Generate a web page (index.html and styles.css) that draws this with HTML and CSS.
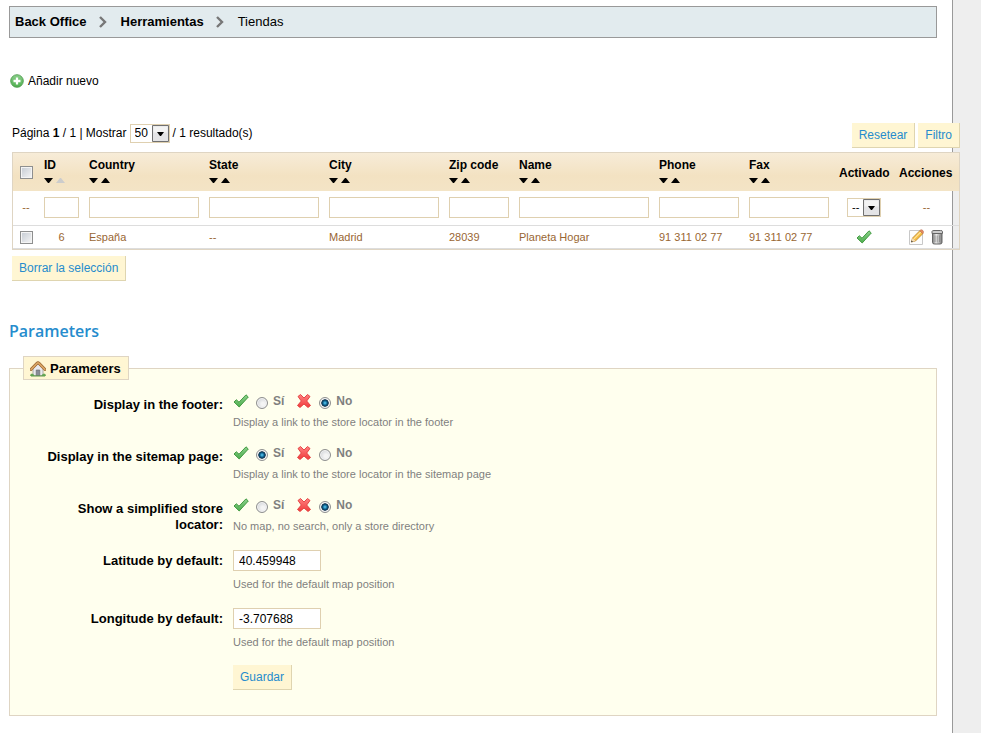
FILE: index.html
```html
<!DOCTYPE html>
<html lang="es">
<head>
    <meta charset="UTF-8">
    <meta name="viewport" content="width=device-width, initial-scale=1.0">
    <title>Tiendas</title>
    <link rel="stylesheet" href="styles.css">
</head>
<body>
    <svg class="sprite" aria-hidden="true">
        <defs>
            <linearGradient id="green" x1="0" y1="0" x2="0" y2="1">
                <stop offset="0" stop-color="#8bd08b"/>
                <stop offset="1" stop-color="#4fae4f"/>
            </linearGradient>
            <linearGradient id="red" x1="0" y1="0" x2="0" y2="1">
                <stop offset="0" stop-color="#ff8080"/>
                <stop offset="1" stop-color="#f03c3c"/>
            </linearGradient>
            <linearGradient id="metal">
                <stop offset="0" stop-color="#777"/>
                <stop offset=".4" stop-color="#eee"/>
                <stop offset="1" stop-color="#777"/>
            </linearGradient>
        </defs>
        <symbol id="chevron" viewBox="0 0 8 12">
            <path d="M1 1l5 5-5 5" fill="none" stroke="#777" stroke-width="2.4"/>
        </symbol>
        <symbol id="add" viewBox="0 0 16 16">
            <circle cx="8" cy="8" r="7.2" fill="url(#green)" stroke="#4d9a4d"/>
            <path d="M8 4v8M4 8h8" stroke="#fff" stroke-width="2.6"/>
        </symbol>
        <symbol id="check" viewBox="0 0 16 16">
            <path d="M1 9l2.3-2.3L6 9.2 13 1.8 15.3 4 6.2 14z" fill="url(#green)" stroke="#379337" stroke-width=".9" stroke-linejoin="round"/>
        </symbol>
        <symbol id="cross" viewBox="0 0 16 16">
            <path d="M2 3.5L4.5 1.5 8 5l3.5-3.5L14 3.5 10.7 8l3.8 4.5-2.500 2L8 11l-4 3.500-2.500-2L5.300 8z" fill="url(#red)" stroke="#e23a3a" stroke-width=".9" stroke-linejoin="round"/>
        </symbol>
        <symbol id="down" viewBox="0 0 9 5">
            <path d="M0 0h9L5 5H4z" fill="currentColor"/>
        </symbol>
        <symbol id="up" viewBox="0 0 9 5">
            <path d="M0 5h9L5 0H4z" fill="currentColor"/>
        </symbol>
        <symbol id="edit" viewBox="0 0 16 16">
            <path d="M1.500 1.500h13v14h-13z" fill="#fdfdfd" stroke="#c8c8c8"/>
            <path d="M3.300 13l1.200-4L11.800 1.700l3 3L7.500 12z" fill="#f6bd42" stroke="#b8842c" stroke-width=".8"/>
            <path d="M6 9.800l6.800-6.800" stroke="#ffe49a" stroke-width="1.200"/>
            <path d="M11.800 1.700l1-.9q1-.4 2 .6t.7 2l-.7 1.300z" fill="#e58a62" stroke="#b8684a" stroke-width=".5"/>
            <path d="M3.300 13l1.200-4 3 3z" fill="#f3dbb8"/>
            <path d="M3.100 13.300l.5-1.900 1.400 1.300z" fill="#333"/>
        </symbol>
        <symbol id="trash" viewBox="0 0 16 16">
            <path d="M3.500 4.500h9.500v9q0 1.500-2 1.500h-5.500q-2 0-2-1.500z" fill="url(#metal)" stroke="#666"/>
            <path d="M6 6.500v6.500M8.200 6.500v7M10.500 6.500v6.500" stroke="#888" stroke-width=".8"/>
            <path d="M3 2.500q0-1 2-1h6.500q2 0 2 1v2H3z" fill="#ccc" stroke="#666"/>
        </symbol>
        <symbol id="home" viewBox="0 0 16 16">
            <path d="M3 8l5-5 5 5v6.500H3z" fill="#e9e9ee" stroke="#999" stroke-width=".8"/>
            <path d="M6.200 9h3.600v5.500H6.200z" fill="#888c98" stroke="#666" stroke-width=".6"/>
            <path d="M1.200 8.300L7 2.300q1-.9 2 0l5.800 6" fill="none" stroke="#96602c" stroke-width="3" stroke-linecap="round"/>
            <path d="M1.200 8.300L7 2.300q1-.9 2 0l5.800 6" fill="none" stroke="#d9a464" stroke-width="1.800" stroke-linecap="round"/>
            <path d="M0 15q.2-2.500 2-2.500t2.500 2.500zM11.500 15q.5-2.500 2.500-2.500t2 2.500z" fill="#68a858"/>
            <path d="M1 15h14" stroke="#5a9a4c"/>
        </symbol>
    </svg>

    <main class="content">
        <nav class="path-bar">
            <a href="#">Back Office</a>
            <svg><use href="#chevron"/></svg>
            <a href="#">Herramientas</a>
            <svg><use href="#chevron"/></svg>
            <span>Tiendas</span>
        </nav>

        <a class="add-link" href="#"><svg><use href="#add"/></svg>Añadir nuevo</a>

        <form class="list">
            <div class="list-bar">
                <div class="pagination">
                    <span>Página <b>1</b> / 1 | <label for="pagination">Mostrar</label></span>
                    <select id="pagination"><option>50</option></select>
                    <span>/ 1 resultado(s)</span>
                </div>
                <div class="list-buttons">
                    <button type="button" class="button">Resetear</button>
                    <button type="button" class="button">Filtro</button>
                </div>
            </div>

            <table class="table">
                <thead>
                    <tr>
                        <th class="col-check"><input type="checkbox" aria-label="Seleccionar todo"></th>
                        <th class="col-id">ID<span class="sort"><a href="#" aria-label="Descendente"><svg><use href="#down"/></svg></a><a href="#" class="off" aria-label="Ascendente"><svg><use href="#up"/></svg></a></span></th>
                        <th class="col-place">Country<span class="sort"><a href="#" aria-label="Descendente"><svg><use href="#down"/></svg></a><a href="#" aria-label="Ascendente"><svg><use href="#up"/></svg></a></span></th>
                        <th class="col-place">State<span class="sort"><a href="#" aria-label="Descendente"><svg><use href="#down"/></svg></a><a href="#" aria-label="Ascendente"><svg><use href="#up"/></svg></a></span></th>
                        <th class="col-place">City<span class="sort"><a href="#" aria-label="Descendente"><svg><use href="#down"/></svg></a><a href="#" aria-label="Ascendente"><svg><use href="#up"/></svg></a></span></th>
                        <th class="col-zip">Zip code<span class="sort"><a href="#" aria-label="Descendente"><svg><use href="#down"/></svg></a><a href="#" aria-label="Ascendente"><svg><use href="#up"/></svg></a></span></th>
                        <th class="col-name">Name<span class="sort"><a href="#" aria-label="Descendente"><svg><use href="#down"/></svg></a><a href="#" aria-label="Ascendente"><svg><use href="#up"/></svg></a></span></th>
                        <th class="col-phone">Phone<span class="sort"><a href="#" aria-label="Descendente"><svg><use href="#down"/></svg></a><a href="#" aria-label="Ascendente"><svg><use href="#up"/></svg></a></span></th>
                        <th class="col-phone">Fax<span class="sort"><a href="#" aria-label="Descendente"><svg><use href="#down"/></svg></a><a href="#" aria-label="Ascendente"><svg><use href="#up"/></svg></a></span></th>
                        <th class="col-active">Activado</th>
                        <th class="col-actions">Acciones</th>
                    </tr>
                </thead>
                <tbody>
                    <tr class="filters">
                        <td class="center">--</td>
                        <td><input type="text" aria-label="ID"></td>
                        <td><input type="text" aria-label="Country"></td>
                        <td><input type="text" aria-label="State"></td>
                        <td><input type="text" aria-label="City"></td>
                        <td><input type="text" aria-label="Zip code"></td>
                        <td><input type="text" aria-label="Name"></td>
                        <td><input type="text" aria-label="Phone"></td>
                        <td><input type="text" aria-label="Fax"></td>
                        <td class="center"><select aria-label="Activado"><option>--</option></select></td>
                        <td class="center">--</td>
                    </tr>
                    <tr>
                        <td class="center"><input type="checkbox" aria-label="Seleccionar 6"></td>
                        <td class="center">6</td>
                        <td>España</td>
                        <td>--</td>
                        <td>Madrid</td>
                        <td>28039</td>
                        <td>Planeta Hogar</td>
                        <td>91 311 02 77</td>
                        <td>91 311 02 77</td>
                        <td class="center"><a href="#" aria-label="Activado"><svg class="icon"><use href="#check"/></svg></a></td>
                        <td><div class="actions"><a href="#" aria-label="Modificar"><svg class="icon"><use href="#edit"/></svg></a><a href="#" aria-label="Eliminar"><svg class="icon"><use href="#trash"/></svg></a></div></td>
                    </tr>
                </tbody>
            </table>

            <button type="button" class="button">Borrar la selección</button>
        </form>

        <h2>Parameters</h2>
        <form>
            <fieldset>
                <legend><svg class="icon"><use href="#home"/></svg>Parameters</legend>

                <div class="row" role="radiogroup" aria-labelledby="footer-label">
                    <span class="row-label" id="footer-label">Display in the footer:</span>
                    <div>
                        <div class="toggle">
                            <svg class="icon"><use href="#check"/></svg>
                            <input type="radio" name="footer" id="footer-on">
                            <label for="footer-on">Sí</label>
                            <svg class="icon"><use href="#cross"/></svg>
                            <input type="radio" name="footer" id="footer-off" checked>
                            <label for="footer-off">No</label>
                        </div>
                        <p>Display a link to the store locator in the footer</p>
                    </div>
                </div>

                <div class="row" role="radiogroup" aria-labelledby="sitemap-label">
                    <span class="row-label" id="sitemap-label">Display in the sitemap page:</span>
                    <div>
                        <div class="toggle">
                            <svg class="icon"><use href="#check"/></svg>
                            <input type="radio" name="sitemap" id="sitemap-on" checked>
                            <label for="sitemap-on">Sí</label>
                            <svg class="icon"><use href="#cross"/></svg>
                            <input type="radio" name="sitemap" id="sitemap-off">
                            <label for="sitemap-off">No</label>
                        </div>
                        <p>Display a link to the store locator in the sitemap page</p>
                    </div>
                </div>

                <div class="row" role="radiogroup" aria-labelledby="simple-label">
                    <span class="row-label" id="simple-label">Show a simplified store locator:</span>
                    <div>
                        <div class="toggle">
                            <svg class="icon"><use href="#check"/></svg>
                            <input type="radio" name="simple" id="simple-on">
                            <label for="simple-on">Sí</label>
                            <svg class="icon"><use href="#cross"/></svg>
                            <input type="radio" name="simple" id="simple-off" checked>
                            <label for="simple-off">No</label>
                        </div>
                        <p>No map, no search, only a store directory</p>
                    </div>
                </div>

                <div class="row row-text">
                    <label class="row-label" for="latitude">Latitude by default:</label>
                    <div>
                        <input type="text" id="latitude" value="40.459948">
                        <p>Used for the default map position</p>
                    </div>
                </div>

                <div class="row row-text">
                    <label class="row-label" for="longitude">Longitude by default:</label>
                    <div>
                        <input type="text" id="longitude" value="-3.707688">
                        <p>Used for the default map position</p>
                    </div>
                </div>

                <div class="submit">
                    <button type="button" class="button">Guardar</button>
                </div>
            </fieldset>
        </form>
    </main>
</body>
</html>
```

FILE: styles.css
```css
* {
    box-sizing: border-box;
}
body {
    margin: 0;
    background: #eee;
    color: #000;
    font: 12px/16px Arial, "Liberation Sans", sans-serif;
}
a {
    color: inherit;
    text-decoration: none;
}
input, select, button {
    font: inherit;
    margin: 0;
}
.sprite {
    position: absolute;
    width: 0;
    height: 0;
}
.icon {
    display: block;
    width: 16px;
    height: 16px;
}
.content {
    min-height: 100vh;
    margin-right: 28px;
    padding: 6px 15px 17px 9px;
    border-right: 1px solid #999;
    background: #fff;
}

/* breadcrumb */
.path-bar {
    display: flex;
    align-items: center;
    height: 32px;
    padding: 0 5px;
    border: 1px solid #999;
    background: #e2ebee;
    font-size: 13px;
}
.path-bar a {
    font-weight: bold;
}
.path-bar svg {
    width: 8px;
    height: 12px;
    margin: 0 14px 0 12px;
}
.add-link {
    display: flex;
    align-items: center;
    gap: 4px;
    width: max-content;
    margin: 35px 0 34px 1px;
}
.add-link svg {
    width: 14px;
    height: 14px;
}

/* form controls */
input[type="text"] {
    display: block;
    width: 100%;
    height: 21px;
    padding: 0 5px;
    border: 1px solid #dfd0b0;
    background: #fff;
}
input[type="checkbox"] {
    appearance: none;
    display: block;
    width: 13px;
    height: 13px;
    margin: 0 auto;
    border: 1px solid #8e8f8f;
    background: linear-gradient(135deg, #c4cad2, #f6f6f6);
    box-shadow: inset 0 0 0 1px #f4f4f4;
}
input[type="radio"] {
    appearance: none;
    width: 12px;
    height: 12px;
    border: 1px solid #8e8f8f;
    border-radius: 50%;
    background: radial-gradient(circle at 60% 60%, #f4f4f4 20%, #c4c8ce);
    box-shadow: inset 0 0 0 1px #f4f4f4;
}
input[type="radio"]:checked {
    background: radial-gradient(circle, #4fc0ec 5%, #0b5a86 32%, #0d2f4a 48%, #f4f4f4 58%);
}
select {
    appearance: none;
    height: 19px;
    padding: 0 20px 0 4px;
    border: 1px solid #dfd0b0;
    border-radius: 0;
    background: #fff url('data:image/svg+xml,<svg xmlns="http://www.w3.org/2000/svg" width="17" height="17"><path d="M.5.5h16v16H.5z" fill="%23e4e4e6" stroke="%23707070"/><path d="M1.500 1.500h14v6h-14z" fill="%23f3f3f3"/><path d="M5 7h7l-3 4H8z"/></svg>') right top no-repeat;
    color: #000;
}
.button {
    height: 25px;
    padding: 0 7px;
    border: solid #dfd5b0;
    border-width: 0 1px 1px 0;
    background: #fff6d3;
    color: #268ccd;
    cursor: pointer;
}

/* store list, runs a bit over the right edge of the page */
.list {
    margin: 0 -23px 0 3px;
}
.list-bar {
    display: flex;
    justify-content: space-between;
    margin-bottom: 4px;
}
.pagination {
    display: flex;
    align-items: center;
    gap: 3px;
    height: 20px;
}
.list-buttons {
    display: flex;
    gap: 3px;
}
.table {
    width: 100%;
    margin-bottom: 6px;
    border: 1px solid #dfd5c3;
    border-spacing: 0;
    table-layout: fixed;
    font-size: 11px;
    color: #996633;
}
.table th {
    height: 38px;
    padding: 1px 5px 0;
    text-align: left;
    font-size: 12px;
    color: #000;
}
.table thead {
    background: linear-gradient(#f7ecd8, #f3e2c2 60%, #f3e4c6);
}
.table td {
    height: 23px;
    padding: 0 5px;
    border-bottom: 1px solid #ddd;
}
.table .filters td {
    height: 35px;
    padding-bottom: 2px;
}
.table .center {
    text-align: center;
}
.table .center .icon {
    margin: 0 auto;
}
.filters select {
    font-size: 11px;
}
.col-check { width: 26px; }
.col-id { width: 45px; }
.col-zip { width: 70px; }
.col-name { width: 140px; }
.col-phone { width: 90px; }
.col-active { width: 60px; }
.col-actions { width: 65px; }
.sort {
    display: flex;
    gap: 3px;
    padding: 5px 0;
}
.sort svg {
    display: block;
    width: 9px;
    height: 5px;
}
.sort .off {
    color: #ccc;
}
.actions {
    display: flex;
    justify-content: center;
    gap: 5px;
}

/* parameters */
h2 {
    margin: 38px 0 13px;
    font: 600 16px/24px "Trebuchet MS", "Open Sans", sans-serif;
    color: #268ccd;
}
fieldset {
    margin: 0;
    padding: 11px 13px 25px 0;
    border: 1px solid #dfd5c3;
    background: #ffffee;
}
legend {
    display: flex;
    align-items: center;
    gap: 4px;
    height: 24px;
    margin-left: 13px;
    padding: 1px 7px 0 6px;
    border: 1px solid #dfd5c3;
    background: #fff6d3;
    font-size: 13px;
    font-weight: bold;
}
.row {
    display: grid;
    grid-template-columns: 213px 1fr;
    gap: 10px;
    height: 52px;
}
.row-label {
    padding: 6px 0 0 30px;
    text-align: right;
    font-size: 13px;
    font-weight: bold;
}
.row p {
    margin: 4px 0 0;
    font-size: 11px;
    line-height: 14px;
    color: #7f7f7f;
}
.row-text {
    height: 58px;
    padding-top: 3px;
}
.row-text .row-label {
    padding-top: 3px;
}
.row-text input[type="text"] {
    width: 88px;
}
.row-text p {
    margin-top: 6px;
}
.toggle {
    display: flex;
    align-items: center;
    height: 20px;
}
.toggle label {
    margin: 0 12px 0 5px;
    font-weight: bold;
    color: #7f7f7f;
}
.toggle input {
    margin: 3px 0 0 7px;
}
.submit {
    padding: 2px 0 0 223px;
}
```
